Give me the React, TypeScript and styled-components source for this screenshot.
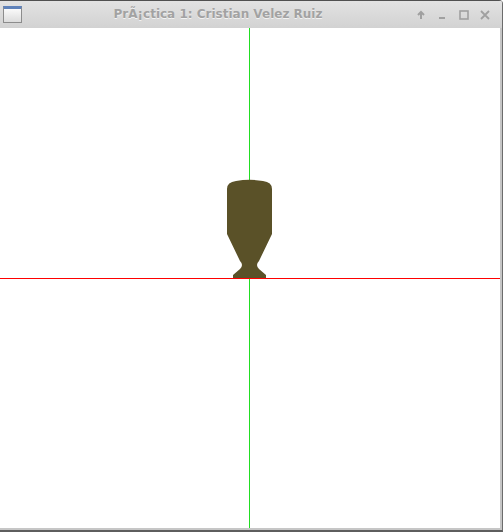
import React from "react";
import styled, { createGlobalStyle } from "styled-components";

const Global = createGlobalStyle`
  html, body { margin: 0; padding: 0; background: #ffffff; }
  body { font-family: "DejaVu Sans", "Liberation Sans", sans-serif; }
`;

const Window = styled.div`
  width: 503px;
  height: 532px;
  box-sizing: border-box;
  display: flex;
  flex-direction: column;
  border-right: 1px solid #6c6c6c;
  border-bottom: 2px solid #5e5e5e;
  border-top-right-radius: 4px;
  overflow: hidden;
  background: #d4d4d4;
`;

const TitleBar = styled.div`
  height: 28px;
  box-sizing: border-box;
  flex: none;
  display: flex;
  align-items: center;
  border-top: 1px solid #505050;
  background: linear-gradient(#e2e2e2, #d2d2d2);
  padding-left: 3px;
  padding-right: 6px;
`;

const AppIcon = styled.div`
  width: 19px;
  height: 17px;
  box-sizing: border-box;
  border: 1px solid #8c8c8c;
  border-top: 3px solid #5f82ba;
  background: linear-gradient(#fafafa, #dcdcdc);
  margin-top: -1px;
  flex: none;
`;

const Title = styled.div`
  flex: 1;
  text-align: center;
  font-family: "DejaVu Sans", sans-serif;
  font-weight: bold;
  font-size: 12px;
  color: #a2a2a2;
  text-shadow: 0 1px 0 #f2f2f2;
  white-space: nowrap;
  margin-top: -1px;
  padding-left: 4px;
`;

const Buttons = styled.div`
  display: flex;
  flex: none;
`;

const Btn = styled.div`
  width: 21.5px;
  height: 20px;
  display: flex;
  align-items: center;
  justify-content: center;
  color: #a0a0a0;
`;

const Body = styled.div`
  flex: 1;
  display: flex;
  border-right: 2px solid #c6c6c6;
  border-bottom: 2px solid #c6c6c6;
`;

const Canvas = styled.svg`
  display: block;
  width: 500px;
  height: 500px;
  background: #ffffff;
`;

const vase =
  "M 227 234 L 227 189 Q 227 182 236 181 Q 249.5 178.5 263 181 Q 272 182 272 189 L 272 234 L 259 261 Q 255 265 259 269 L 266 275 L 266 278 L 233 278 L 233 275 L 240 269 Q 244 265 240 261 Z";

export default function App() {
  return (
    <>
      <Global />
      <Window>
        <TitleBar>
          <AppIcon />
          <Title>PrÃ¡ctica 1: Cristian Velez Ruiz</Title>
          <Buttons>
            <Btn>
              <svg width="10" height="10" viewBox="0 0 10 10">
                <path d="M5 9 V2 M2 5 L5 2 L8 5" stroke="currentColor" strokeWidth="2" fill="none" />
              </svg>
            </Btn>
            <Btn>
              <svg width="10" height="10" viewBox="0 0 10 10">
                <rect x="2" y="7" width="6" height="2" fill="currentColor" />
              </svg>
            </Btn>
            <Btn>
              <svg width="10" height="10" viewBox="0 0 10 10">
                <rect x="1" y="1" width="8" height="8" stroke="currentColor" strokeWidth="1.6" fill="none" />
              </svg>
            </Btn>
            <Btn>
              <svg width="10" height="10" viewBox="0 0 10 10">
                <path d="M1 1 L9 9 M9 1 L1 9" stroke="currentColor" strokeWidth="1.8" fill="none" />
              </svg>
            </Btn>
          </Buttons>
        </TitleBar>
        <Body>
          <Canvas viewBox="0 28 500 500">
            <line x1="249.5" y1="28" x2="249.5" y2="528" stroke="#22dd22" strokeWidth="1" shapeRendering="crispEdges" />
            <line x1="0" y1="278.5" x2="500" y2="278.5" stroke="#ff0000" strokeWidth="1" shapeRendering="crispEdges" />
            <path d={vase} fill="#5a5128" />
          </Canvas>
        </Body>
      </Window>
    </>
  );
}
